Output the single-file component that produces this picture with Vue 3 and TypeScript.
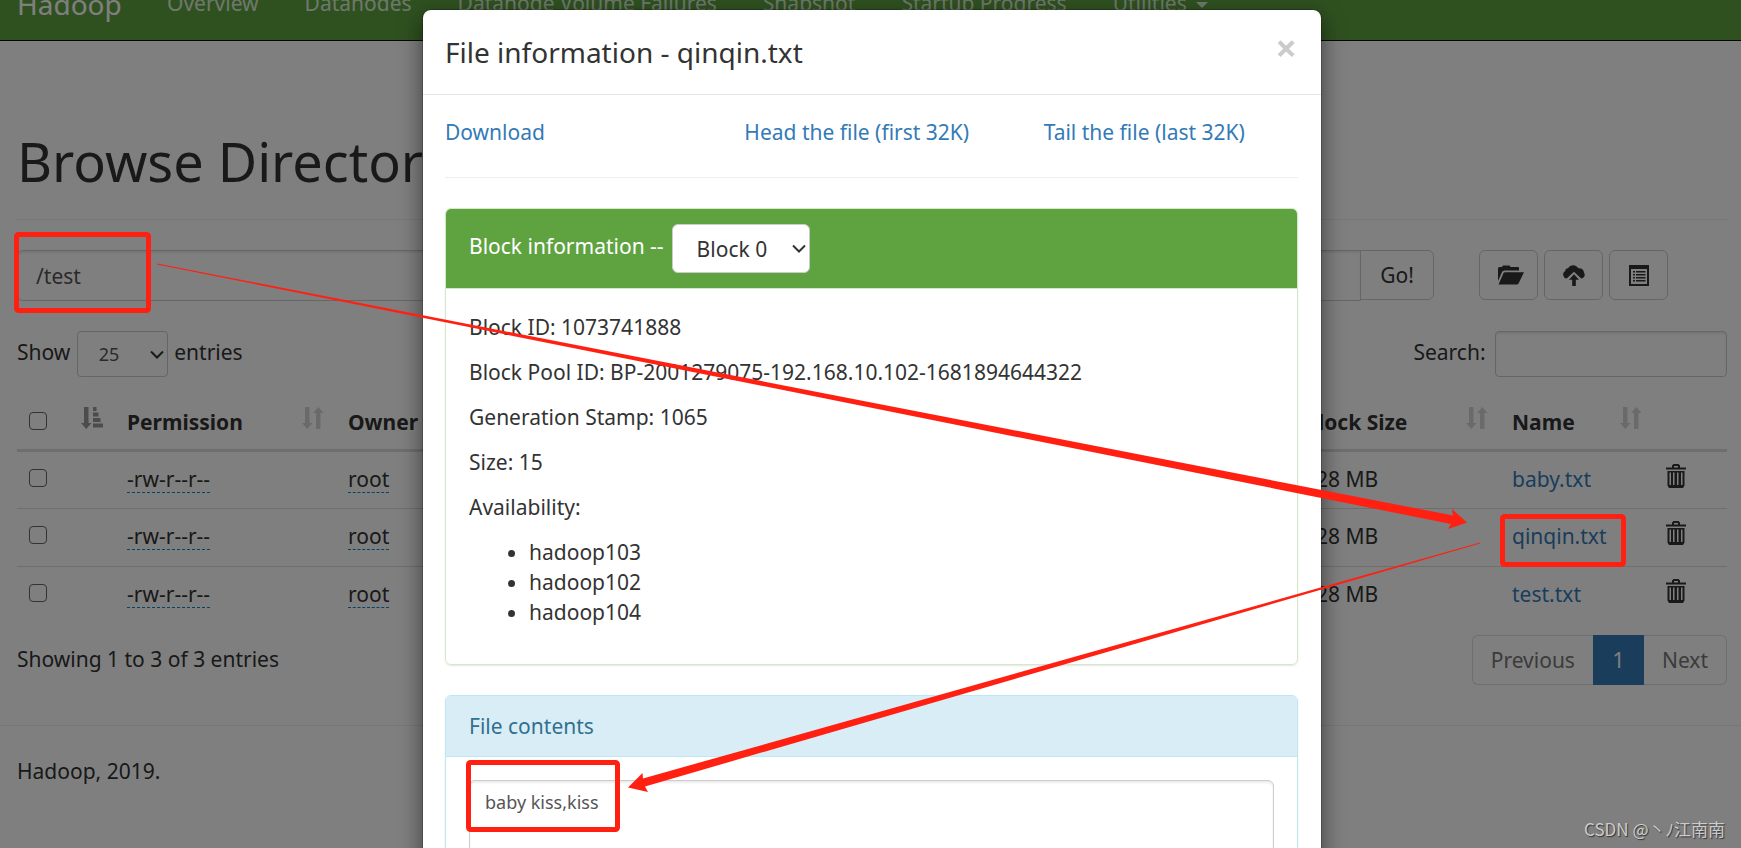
<script setup lang="ts">
import { ref } from 'vue'

interface FileRow {
  name: string
  permission: string
  owner: string
  blockSize: string
}

const navItems: string[] = ['Overview', 'Datanodes', 'Datanode Volume Failures', 'Snapshot', 'Startup Progress']

const files: FileRow[] = [
  { name: 'baby.txt', permission: '-rw-r--r--', owner: 'root', blockSize: '128 MB' },
  { name: 'qinqin.txt', permission: '-rw-r--r--', owner: 'root', blockSize: '128 MB' },
  { name: 'test.txt', permission: '-rw-r--r--', owner: 'root', blockSize: '128 MB' },
]

const blockDetails: string[] = [
  'Block ID: 1073741888',
  'Block Pool ID: BP-2001279075-192.168.10.102-1681894644322',
  'Generation Stamp: 1065',
  'Size: 15',
  'Availability:',
]

const hosts: string[] = ['hadoop103', 'hadoop102', 'hadoop104']

const directory = ref('/test')
const pageSize = ref('25')
const search = ref('')
const block = ref('Block 0')
const contents = ref('baby kiss,kiss')
</script>

<template>
  <div class="app">
    <header class="navbar">
      <a class="brand" href="#">Hadoop</a>
      <nav class="nav">
        <a v-for="item in navItems" :key="item" href="#">{{ item }}</a>
        <a href="#">Utilities <span class="caret"></span></a>
      </nav>
    </header>

    <main class="page">
      <h1>Browse Directory</h1>

      <div class="toolbar">
        <form class="path-form" @submit.prevent>
          <input v-model="directory" class="path-input" type="text" aria-label="Directory" />
          <button class="btn go" type="submit">Go!</button>
        </form>
        <div class="tools">
          <button class="btn tool" type="button" aria-label="Create directory">
            <svg width="21" height="20" viewBox="0 0 21 20">
              <path d="M0 16V3.500Q0 2 1.500 2H4L5 .5H11.500L12.500 2H20Q21 2 21 3V5.500H6.500Q4.800 5.500 4 7Z" />
              <path d="M7 7.300H26L20.500 18.500Q20 19.500 19 19.500H.5L5.500 8.300Q6 7.300 7 7.300Z" />
            </svg>
          </button>
          <button class="btn tool" type="button" aria-label="Upload files">
            <svg width="22" height="21" viewBox="0 0 22 21">
              <path d="M3.600 13.500A4 4 0 0 1 2.300 6 2.800 2.800 0 0 1 5 3.200 6.200 6.200 0 0 1 15.500 3.300 4.600 4.600 0 0 1 21 7.800C22.600 10 21.500 13 18.200 13.500L11 6.800Z" />
              <path d="M11 9.200 16 14.700H12.800V21H9.200V14.700H6Z" />
            </svg>
          </button>
          <button class="btn tool" type="button" aria-label="Cut and paste">
            <svg width="20" height="21" viewBox="0 0 20 21">
              <path fill-rule="evenodd" d="M0 0H20V21H0ZM2 4V19H18V4Z" />
              <path d="M4 6H6V7.500H4ZM7 6H16.500V7.500H7ZM4 9H6V10.500H4ZM7 9H16.500V10.500H7ZM4 12H6V13.500H4ZM7 12H16.500V13.500H7ZM4 15H6V16.500H4ZM7 15H16.500V16.500H7Z" />
            </svg>
          </button>
        </div>
      </div>

      <div class="filters">
        <label class="length">
          Show
          <span class="select small">
            <select v-model="pageSize"><option>25</option></select>
            <svg class="chevron" width="14" height="9" viewBox="0 0 14 9"><path d="M1 1.500 7 7.500 13 1.500" /></svg>
          </span>
          entries
        </label>
        <label class="search">
          Search:
          <input v-model="search" type="search" />
        </label>
      </div>

      <table class="files">
        <colgroup>
          <col class="c-check" /><col class="c-perm" /><col /><col class="c-block" /><col class="c-name" /><col class="c-del" />
        </colgroup>
        <thead>
          <tr>
            <th>
              <div class="th">
                <input type="checkbox" aria-label="Select all" />
                <svg class="sort on" width="22" height="22" viewBox="0 0 22 22">
                  <path d="M3 0H7.500V16H10.500L5.300 22 0 16H3ZM12 0H15.500V4H12ZM12 5.500H17.500V9.500H12ZM12 11H19.500V15H12ZM12 16.500H22V20.500H12Z" />
                </svg>
              </div>
            </th>
            <th><div class="th"><span>Permission</span><svg class="sort" width="22" height="22" viewBox="0 0 22 22"><path d="M3 0H7.500V16H10.500L5.300 22 0 16H3ZM14 22V6H11L16.300 0 21.500 6H18.500V22Z" /></svg></div></th>
            <th><div class="th"><span>Owner</span></div></th>
            <th><div class="th"><span>Block Size</span><svg class="sort" width="22" height="22" viewBox="0 0 22 22"><path d="M3 0H7.500V16H10.500L5.300 22 0 16H3ZM14 22V6H11L16.300 0 21.500 6H18.500V22Z" /></svg></div></th>
            <th><div class="th"><span>Name</span><svg class="sort" width="22" height="22" viewBox="0 0 22 22"><path d="M3 0H7.500V16H10.500L5.300 22 0 16H3ZM14 22V6H11L16.300 0 21.500 6H18.500V22Z" /></svg></div></th>
            <th></th>
          </tr>
        </thead>
        <tbody>
          <tr v-for="file in files" :key="file.name">
            <td><div class="th"><input type="checkbox" :aria-label="'Select ' + file.name" /></div></td>
            <td><span class="editable">{{ file.permission }}</span></td>
            <td><span class="editable">{{ file.owner }}</span></td>
            <td>{{ file.blockSize }}</td>
            <td><a href="#">{{ file.name }}</a></td>
            <td>
              <button class="trash" type="button" :aria-label="'Delete ' + file.name">
                <svg width="20" height="24" viewBox="0 0 20 24">
                  <path fill-rule="evenodd" d="M6 3.500V1.500L7.500 0H12.500L14 1.500V3.500H20V5.500H0V3.500ZM8 3.500H12V2H8ZM1.500 7H18.500V21.500L17 24H3L1.500 21.500ZM3.500 8.500V21H5V8.500ZM7 8.500V21H8.500V8.500ZM11 8.500V21H12.500V8.500ZM15 8.500V21H16.500V8.500Z" />
                </svg>
              </button>
            </td>
          </tr>
        </tbody>
      </table>

      <div class="table-footer">
        <span class="summary">Showing 1 to 3 of 3 entries</span>
        <nav class="pagination" aria-label="Pages">
          <button type="button">Previous</button>
          <button type="button" class="current">1</button>
          <button type="button">Next</button>
        </nav>
      </div>
    </main>

    <footer class="footer">Hadoop, 2019.</footer>

    <div class="backdrop">
      <section class="modal" role="dialog" aria-labelledby="modal-title">
        <div class="modal-header">
          <h4 id="modal-title">File information - qinqin.txt</h4>
          <button class="close" type="button" aria-label="Close">×</button>
        </div>
        <div class="modal-body">
          <div class="links">
            <a href="#">Download</a>
            <a href="#">Head the file (first 32K)</a>
            <a href="#">Tail the file (last 32K)</a>
          </div>
          <hr />
          <div class="panel success">
            <div class="panel-heading">
              <label for="block-select">Block information --</label>
              <span class="select wide">
                <select id="block-select" v-model="block"><option>Block 0</option></select>
                <svg class="chevron" width="14" height="9" viewBox="0 0 14 9"><path d="M1 1.500 7 7.500 13 1.500" /></svg>
              </span>
            </div>
            <div class="panel-body">
              <p v-for="line in blockDetails" :key="line">{{ line }}</p>
              <ul>
                <li v-for="host in hosts" :key="host">{{ host }}</li>
              </ul>
            </div>
          </div>
          <div class="panel info">
            <div class="panel-heading"><label for="contents">File contents</label></div>
            <div class="panel-body">
              <textarea id="contents" v-model="contents" rows="8"></textarea>
            </div>
          </div>
        </div>
      </section>
    </div>

    <svg class="marks" width="1741" height="848" viewBox="0 0 1741 848" aria-hidden="true">
      <g class="boxes">
        <rect x="16.500" y="234.500" width="132" height="76" rx="2" />
        <rect x="1502.500" y="516.500" width="121" height="48" rx="2" />
        <rect x="468.500" y="762.500" width="149" height="67" rx="2" />
      </g>
      <path d="M157 263.500 1453 515.500 1452 509 1467 522.500 1448 529 1451 524 157 264.500Z" />
      <path d="M1480 542.500 643 778.500 642.500 773 628 787.500 648 792 645 786.500 1480 543.500Z" />
    </svg>

    <div class="watermark">CSDN @丶ﾉ江南南</div>
  </div>
</template>

<style>
body {
  margin: 0;
  overflow: hidden;
}
</style>

<style scoped>
.app {
  position: relative;
  height: 100vh;
  overflow: hidden;
  background: #fff;
  color: #333;
  font: 21px/30px "Noto Sans", "Noto Sans CJK SC", sans-serif;
}
.app *,
.app *::before {
  box-sizing: border-box;
}
a {
  color: #337ab7;
  text-decoration: none;
}
button,
input,
select,
textarea {
  font: inherit;
  color: inherit;
  margin: 0;
}
.navbar {
  display: flex;
  align-items: flex-end;
  height: 41px;
  overflow: hidden;
  padding-left: 17px;
  background: #5fa341;
  border-bottom: 1px solid #080808;
}
.navbar a {
  color: #dff0d8;
}
.navbar .brand {
  font-size: 28px;
  color: #fff;
  width: 127px;
  padding-bottom: 21px;
}
.nav {
  display: flex;
  white-space: nowrap;
}
.nav a {
  padding: 0 23px 22px;
}
.caret {
  display: inline-block;
  margin-left: 4px;
  vertical-align: middle;
  border-top: 6px solid;
  border-left: 6px solid transparent;
  border-right: 6px solid transparent;
}
.page {
  padding: 90px 14px 40px 17px;
}
h1 {
  margin: 0 0 30px;
  padding-bottom: 28px;
  border-bottom: 1px solid #eee;
  font-size: 54px;
  font-weight: 400;
  line-height: 60px;
}
.toolbar {
  display: flex;
  gap: 45px;
  padding-right: 59px;
}
.path-form {
  flex: 1;
  display: flex;
}
.path-input {
  flex: 1;
  min-width: 0;
  height: 51px;
  padding: 0 18px;
  border: 1px solid #ccc;
  border-radius: 6px 0 0 6px;
  color: #555;
  background: #fff;
  box-shadow: inset 0 2px 2px rgba(0, 0, 0, 0.08);
}
.btn {
  height: 50px;
  padding: 0;
  display: grid;
  place-items: center;
  border: 1px solid #ccc;
  border-radius: 6px;
  background: #fff;
  color: #333;
}
.btn svg {
  fill: currentColor;
  overflow: visible;
}
.go {
  width: 74px;
  margin-left: -1px;
  border-radius: 0 6px 6px 0;
}
.tools {
  display: flex;
  gap: 6px;
}
.tool {
  width: 59px;
}
.filters {
  display: flex;
  justify-content: space-between;
  margin: 30px 0 18px;
}
.filters label {
  height: 46px;
}
.search input {
  width: 232px;
  height: 46px;
  margin-left: 4px;
  padding: 0 15px;
  vertical-align: middle;
  font-size: 18px;
  border: 1px solid #ccc;
  border-radius: 4px;
  box-shadow: inset 0 2px 2px rgba(0, 0, 0, 0.08);
}
.select {
  display: inline-grid;
  align-items: center;
  vertical-align: middle;
  width: 138px;
}
.select > * {
  grid-area: 1 / 1;
}
.select select {
  appearance: none;
  width: 100%;
  height: 49px;
  padding: 0 24px;
  border: 1px solid #ccc;
  border-radius: 6px;
  background: #fff;
  color: #333;
}
.select.wide {
  margin-left: 8px;
}
.select.small {
  width: 91px;
  margin: 0 1px;
}
.select.small select {
  height: 46px;
  padding: 0 21px;
  font-size: 18px;
  border-radius: 4px;
  color: #555;
}
.chevron {
  justify-self: end;
  margin-right: 4px;
  fill: none;
  stroke: #333;
  stroke-width: 2;
  pointer-events: none;
}
.files {
  width: 100%;
  table-layout: fixed;
  border-collapse: separate;
  border-spacing: 0;
}
.c-check {
  width: 98px;
}
.c-perm {
  width: 221px;
}
.c-block {
  width: 208px;
}
.c-name {
  width: 154px;
}
.c-del {
  width: 73px;
}
th,
td {
  padding: 12px;
  text-align: left;
  vertical-align: top;
  white-space: nowrap;
}
th {
  border-bottom: 3px solid #ddd;
}
td {
  height: 58px;
  border-top: 1px solid #ddd;
}
tbody tr:first-child td {
  height: 56px;
  border-top: 0;
}
.th {
  display: flex;
  justify-content: space-between;
  height: 30px;
}
.sort {
  fill: #333;
  opacity: 0.2;
}
.sort.on {
  opacity: 0.5;
}
input[type='checkbox'] {
  appearance: none;
  width: 18px;
  height: 18px;
  margin-top: 5px;
  border: 1px solid #666;
  border-radius: 4px;
  background: #fff;
}
.editable {
  display: inline-block;
  height: 29px;
  border-bottom: 1px dashed #08c;
}
.trash {
  display: block;
  padding: 0;
  border: 0;
  background: none;
}
.trash svg {
  display: block;
  fill: #333;
}
.table-footer {
  display: flex;
  justify-content: space-between;
  margin-top: 11px;
}
.summary {
  padding-top: 9px;
}
.pagination {
  display: flex;
}
.pagination button {
  height: 50px;
  padding: 0 18px;
  border: 1px solid #ddd;
  background: #fff;
  color: #777;
}
.pagination button:first-child {
  border-right: 0;
  border-radius: 6px 0 0 6px;
}
.pagination button:last-child {
  border-left: 0;
  border-radius: 0 6px 6px 0;
}
.pagination .current {
  width: 51px;
  background: #337ab7;
  border-color: #337ab7;
  color: #fff;
}
.footer {
  padding: 30px 17px;
  border-top: 1px solid #eee;
}
.backdrop {
  position: absolute;
  inset: 0;
  overflow: hidden;
  display: flex;
  align-items: flex-start;
  justify-content: center;
  padding: 9px 0 0 3px;
  background: rgba(0, 0, 0, 0.5);
}
.modal {
  width: 900px;
  border: 1px solid rgba(0, 0, 0, 0.2);
  border-radius: 9px;
  background: #fff;
  background-clip: padding-box;
  box-shadow: 0 8px 22px rgba(0, 0, 0, 0.5);
}
.modal-header {
  display: flex;
  justify-content: space-between;
  align-items: flex-start;
  padding: 22px;
  border-bottom: 1px solid #e5e5e5;
}
h4 {
  margin: 0;
  font-size: 28px;
  font-weight: 400;
  line-height: 40px;
}
.close {
  padding: 0 2px;
  border: 0;
  background: none;
  font-size: 38px;
  font-weight: 700;
  line-height: 30px;
  color: #000;
  opacity: 0.2;
}
.modal-body {
  padding: 22px 23px 22px 22px;
}
.links {
  display: grid;
  grid-template-columns: repeat(3, 1fr);
  margin: 0 -23px 0 -22px;
}
.links a {
  padding-left: 22px;
}
hr {
  margin: 30px 0;
  border: 0;
  border-top: 1px solid #eee;
}
.panel {
  margin-bottom: 30px;
  border: 1px solid #d6e9c6;
  border-radius: 6px;
  box-shadow: 0 1px 2px rgba(0, 0, 0, 0.1);
}
.panel-heading {
  padding: 15px 23px;
  border-bottom: 1px solid #d6e9c6;
  border-radius: 5px 5px 0 0;
}
.success .panel-heading {
  background: #5fa341;
  color: #fff;
}
.info,
.info .panel-heading {
  border-color: #bce8f1;
}
.info .panel-heading {
  background: #d9edf7;
  color: #31708f;
}
.panel-body {
  padding: 23px 23px 22px;
}
p {
  margin: 0 0 15px;
}
ul {
  margin: 0 0 15px;
  padding-left: 60px;
}
textarea {
  display: block;
  width: 100%;
  padding: 6px 15px;
  border: 1px solid #ccc;
  border-radius: 6px;
  font-size: 18px;
  color: #555;
  resize: none;
  box-shadow: inset 0 2px 2px rgba(0, 0, 0, 0.08);
}
.marks {
  position: absolute;
  top: 0;
  left: 0;
  fill: #ff2012;
  pointer-events: none;
}
.boxes {
  fill: none;
  stroke: #ff2012;
  stroke-width: 5;
}
.watermark {
  position: absolute;
  right: 16px;
  bottom: 4px;
  font: 17px/30px "Noto Sans CJK SC", sans-serif;
  color: #ccc;
  text-shadow: 1px 1px 1px #333;
}
</style>
